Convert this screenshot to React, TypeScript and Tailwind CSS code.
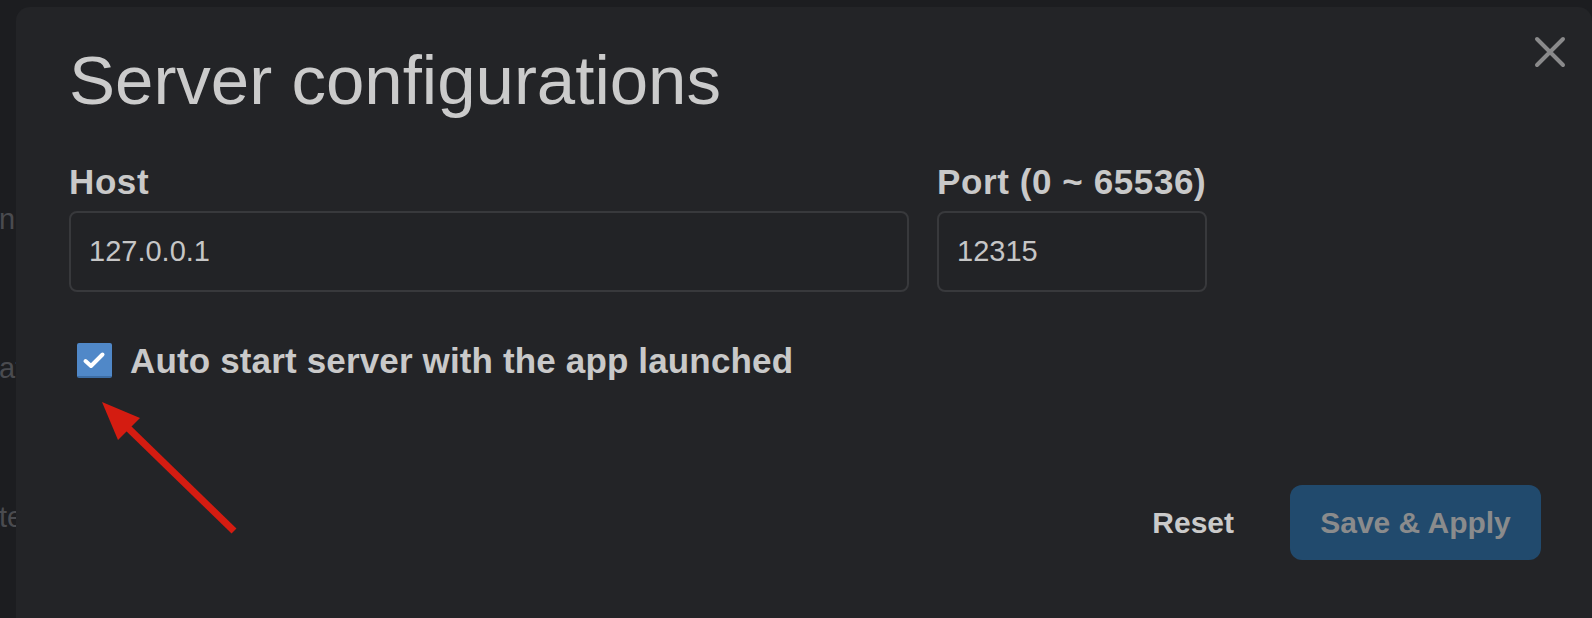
import React from "react";

const font = { fontFamily: '"Liberation Sans", Arial, Helvetica, sans-serif' };

function CloseIcon() {
  return (
    <svg width="36" height="36" viewBox="0 0 36 36" fill="none">
      <path d="M5 5 L31 31 M31 5 L5 31" stroke="#8a8a8b" strokeWidth="4" strokeLinecap="round" />
    </svg>
  );
}

function Field({ label, value, width }: { label: string; value: string; width: string }) {
  return (
    <div className={`flex flex-col ${width}`}>
      <label className="text-[35px] leading-none font-bold tracking-[0.6px] text-[#c9c9c9] -mt-[1px]">{label}</label>
      <div className="mt-[12px] h-[81px] flex items-center px-[18px] rounded-[8px] border-2 border-[#38393c] bg-[#222326] text-[29px] text-[#c6c6c6]">
        {value}
      </div>
    </div>
  );
}

export default function App() {
  return (
    <div className="relative w-[1592px] h-[618px] overflow-hidden bg-[#1c1d20] flex" style={font}>
      {/* page behind the dialog */}
      <div className="w-[16px] shrink-0 overflow-hidden flex flex-col text-[29px] leading-none text-[#4a4b4f] whitespace-nowrap">
        <span className="mt-[205px] -ml-[1px]">ne</span>
        <span className="mt-[120px] -ml-[1px]">at</span>
        <span className="mt-[120px] -ml-[1px]">te</span>
      </div>

      <div className="flex-1 mt-[7px] h-[660px] rounded-t-[14px] bg-[#232427] pl-[53px] pr-[51px] pt-[24px] flex flex-col">
        <div className="flex justify-between items-start">
          <h1 className="mt-[15px] text-[69px] leading-none font-normal text-[#cbcbcb]">Server configurations</h1>
          <button className="mt-[3px] -mr-[27px]">
            <CloseIcon />
          </button>
        </div>

        <div className="mt-[50px] flex gap-[28px]">
          <Field label="Host" value="127.0.0.1" width="w-[840px]" />
          <Field label="Port (0 ~ 65536)" value="12315" width="w-[270px]" />
        </div>

        <div className="mt-[51px] flex items-center">
          <div className="ml-[8px] w-[35px] h-[35px] rounded-[2px] bg-[#5088c8] border-b-2 border-[#3d6ea6] flex items-center justify-center">
            <svg width="35" height="35" viewBox="0 0 35 35" fill="none">
              <path d="M8.5 19 L14 24 L25.5 12.5" stroke="#ffffff" strokeWidth="4" strokeLinecap="round" strokeLinejoin="round" />
            </svg>
          </div>
          <span className="ml-[18px] text-[35px] leading-none font-bold tracking-[0.15px] text-[#c9c9c9]">
            Auto start server with the app launched
          </span>
        </div>

        <div className="mt-[107px] flex justify-end items-center gap-[40px]">
          <button className="px-[16px] text-[30px] font-bold text-[#cacaca]">Reset</button>
          <button className="w-[251px] h-[75px] rounded-[12px] bg-[#214a6d] text-[30px] font-bold text-[#8a8b8c]">
            Save &amp; Apply
          </button>
        </div>
      </div>

      {/* annotation arrow */}
      <svg className="absolute left-0 top-0 pointer-events-none" width="1592" height="618" viewBox="0 0 1592 618">
        <line x1="126" y1="426" x2="234" y2="531" stroke="#d41c11" strokeWidth="7" />
        <polygon points="102,402 118,440 140,418" fill="#d41c11" />
      </svg>
    </div>
  );
}
